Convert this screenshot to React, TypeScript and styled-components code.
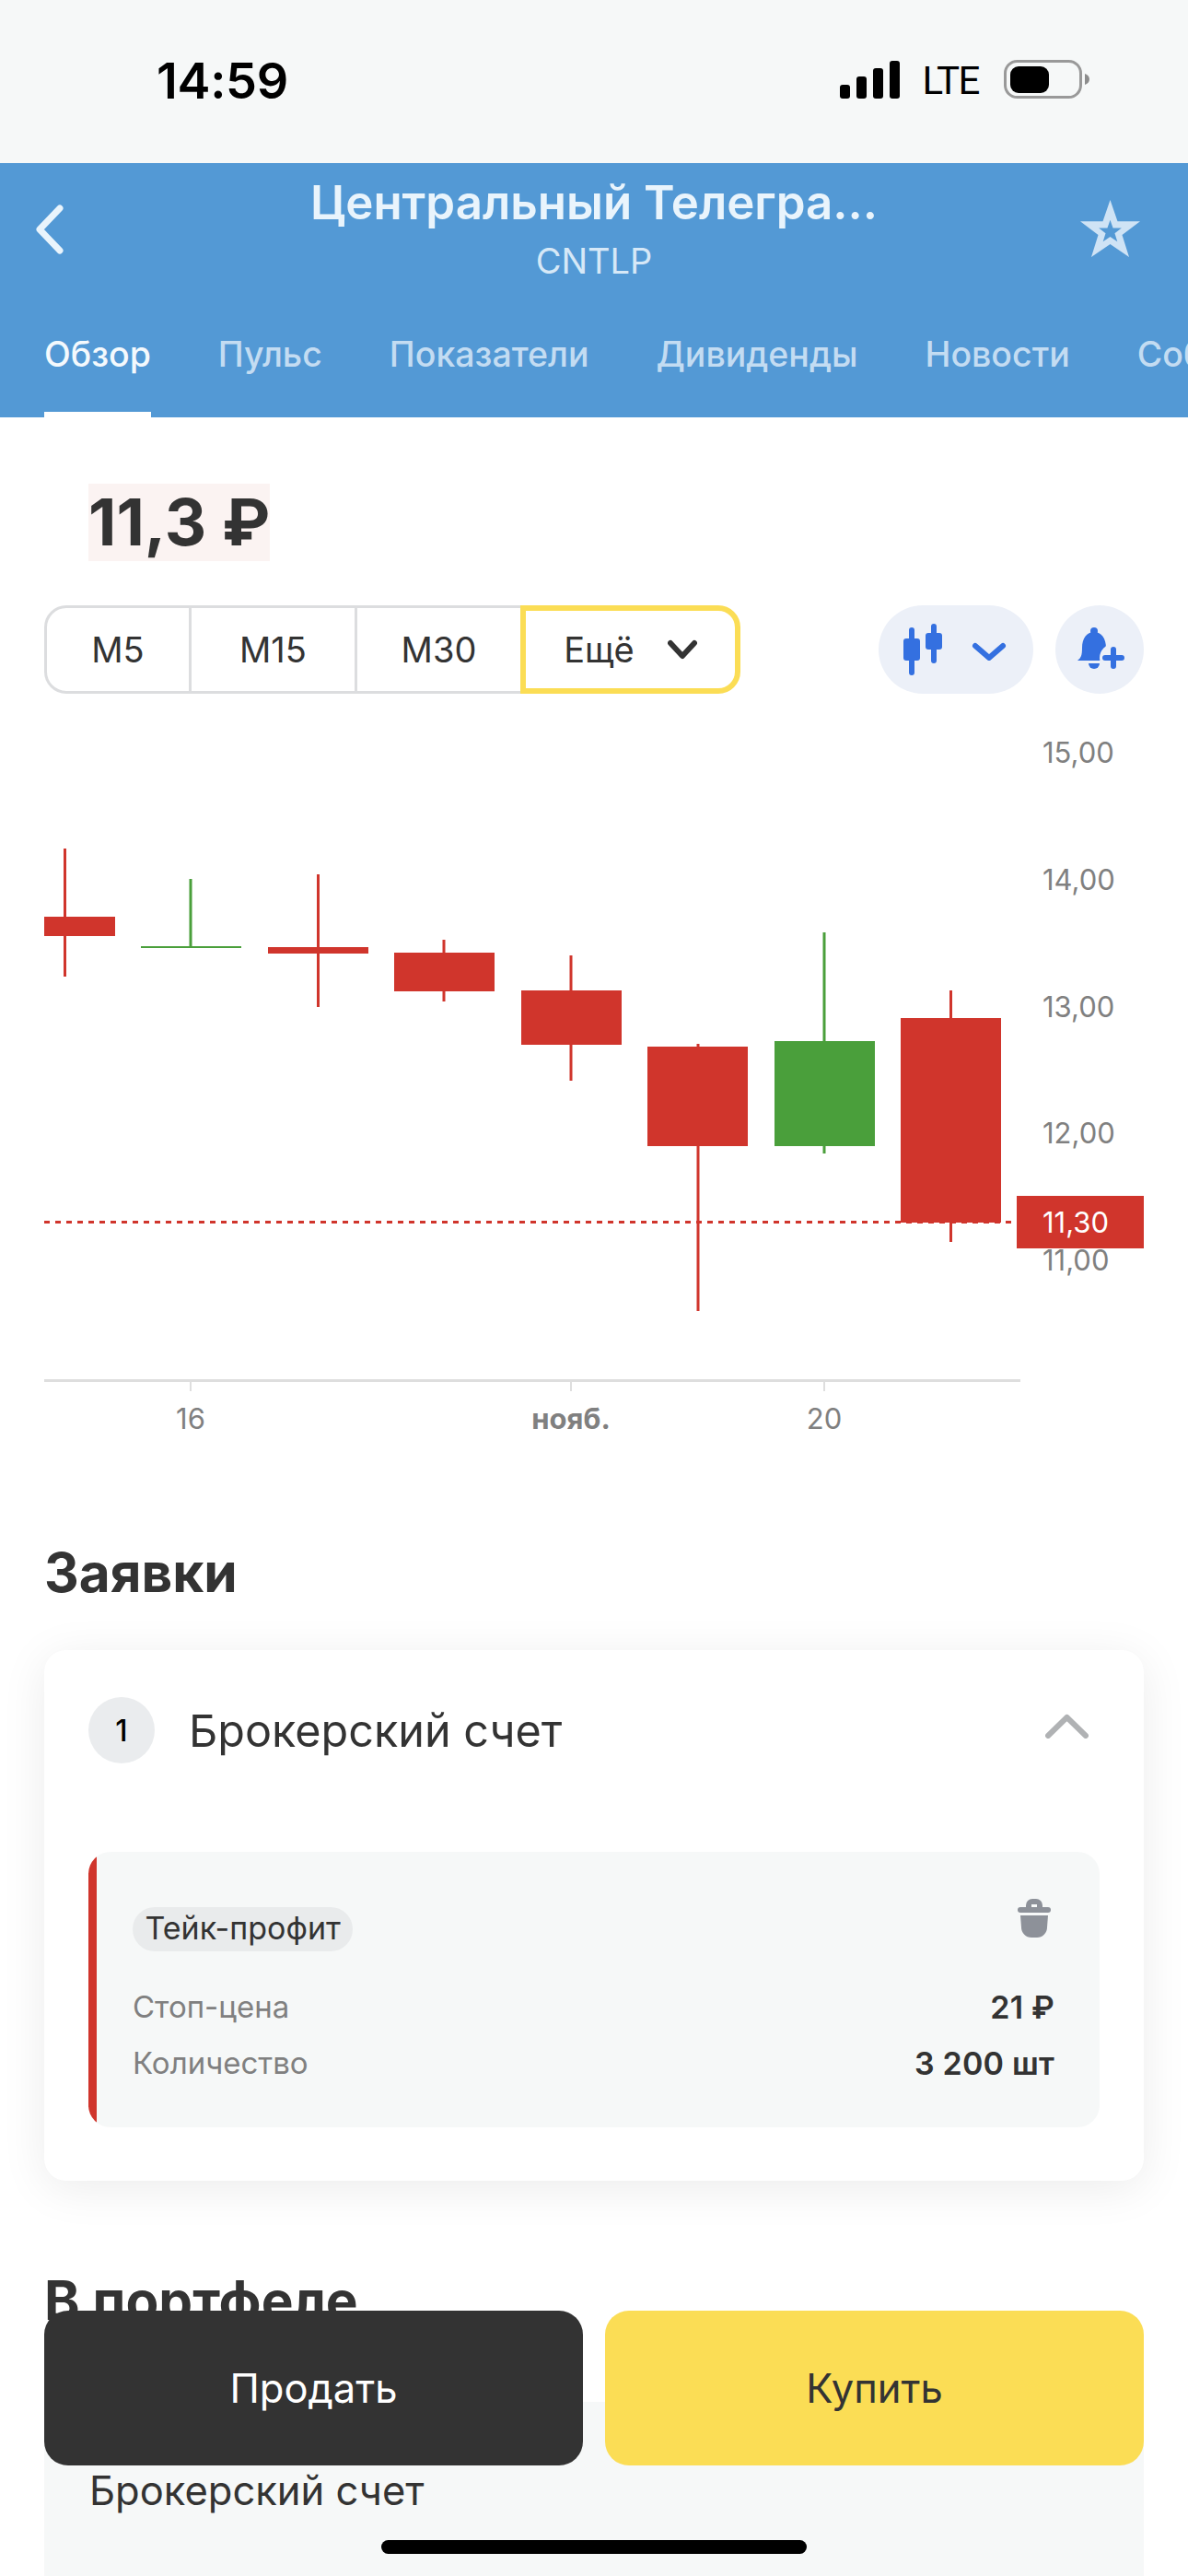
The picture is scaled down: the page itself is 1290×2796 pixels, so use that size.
import React from 'react';
import styled, { createGlobalStyle } from 'styled-components';

const GlobalStyle = createGlobalStyle`
    html, body {
        margin: 0;
        padding: 0;
        background: #fff;
    }
    body {
        font-family: Inter, "Noto Sans", sans-serif;
        color: #333;
    }
`;

const RED = '#d0352c';
const GREEN = '#4a9f3b';

const Page = styled.div`
    position: relative;
    width: 1290px;
    height: 2796px;
    overflow: hidden;
    background: #fff;
`;

const StatusBar = styled.div`
    height: 177px;
    box-sizing: border-box;
    padding: 60px 107px 0 170px;
    background: #f6f8f8;
    display: flex;
    justify-content: space-between;
    align-items: flex-start;
    color: #000;
`;

const Time = styled.div`
    font-size: 54px;
    line-height: 56px;
    font-weight: 600;
    letter-spacing: -0.3px;
`;

const StatusIcons = styled.div`
    display: flex;
    align-items: center;
    height: 42px;
    margin-top: 5px;
`;

const Lte = styled.span`
    font-family: Roboto, sans-serif;
    font-size: 42px;
    line-height: 42px;
    font-weight: 400;
    letter-spacing: -1.5px;
    margin: 4px 27px 0 25px;
`;

const Header = styled.div`
    height: 276px;
    background: #5399d5;
`;

const TopRow = styled.div`
    height: 150px;
    box-sizing: border-box;
    padding: 45px 52px 0 38px;
    display: flex;
    justify-content: space-between;
    align-items: flex-start;
`;

const BackIcon = styled.svg`
    margin-right: 47px;
`;

const StarIcon = styled.svg`
    margin-top: -5px;
`;

const TitleBlock = styled.div`
    flex: 1;
    margin-top: -27px;
    text-align: center;
`;

const Title = styled.div`
    font-size: 51px;
    line-height: 50px;
    font-weight: 600;
    color: #e9f4fc;
`;

const Ticker = styled.div`
    margin-top: 15px;
    font-size: 38px;
    line-height: 46px;
    color: #d6e8f7;
`;

const Tabs = styled.div`
    display: flex;
    gap: 73px;
    padding-left: 48px;
    white-space: nowrap;
    overflow: hidden;
`;

const Tab = styled.div<{ $active?: boolean }>`
    box-sizing: border-box;
    height: 126px;
    padding-top: 33px;
    font-size: 37.5px;
    line-height: 50px;
    font-weight: 500;
    color: ${props => (props.$active ? '#f4f9fd' : '#c3dcf2')};
    border-bottom: 6px solid ${props => (props.$active ? '#fff' : 'transparent')};
`;

const Price = styled.div`
    display: inline-block;
    margin: 72px 0 0 96px;
    background: #fbf3f2;
    font-size: 70.5px;
    line-height: 84px;
    font-weight: 700;
    color: #333;
    vertical-align: top;
`;

const Controls = styled.div`
    margin-top: 48px;
    padding: 0 48px;
    display: flex;
    justify-content: space-between;
`;

const Segments = styled.div`
    display: flex;
    height: 96px;
`;

const Segment = styled.div<{ $width: number; $first?: boolean }>`
    box-sizing: border-box;
    width: ${props => props.$width}px;
    display: flex;
    align-items: center;
    justify-content: center;
    font-size: 38px;
    color: #333;
    border: 3px solid #dcdddf;
    border-left-width: ${props => (props.$first ? 3 : 0)}px;
    border-right-width: 3px;
    border-radius: ${props => (props.$first ? '24px 0 0 24px' : '0')};
`;

const MoreSegment = styled(Segment)`
    gap: 36px;
    border: 6px solid #fbdd55;
    border-radius: 0 24px 24px 0;
    margin-left: -3px;
`;

const Actions = styled.div`
    display: flex;
    gap: 24px;
`;

const RoundButton = styled.div<{ $width: number }>`
    width: ${props => props.$width}px;
    height: 96px;
    border-radius: 48px;
    background: #ecf0f8;
`;

const ChartSvg = styled.svg`
    display: block;
    width: 1290px;
    height: 847px;
`;

const AxisText = styled.text<{ $bold?: boolean; $light?: boolean }>`
    font-family: Inter, sans-serif;
    font-size: 31px;
    font-weight: ${props => (props.$bold ? 700 : 400)};
    fill: ${props => (props.$light ? '#fff' : '#808080')};
`;

const SectionTitle = styled.h2<{ $top: number }>`
    margin: ${props => props.$top}px 0 0 48px;
    font-size: 58.5px;
    line-height: 68px;
    font-weight: 700;
    color: #333;
`;

const Card = styled.div`
    margin: 50px 48px 0;
    height: 576px;
    box-sizing: border-box;
    padding-top: 51px;
    background: #fff;
    border-radius: 24px;
    box-shadow: 0 8px 50px rgba(0, 0, 0, 0.08);
`;

const CardHead = styled.div`
    display: flex;
    align-items: center;
    padding: 0 60px 0 48px;
`;

const CollapseIcon = styled.svg`
    margin-bottom: 9px;
`;

const NumberBadge = styled.div`
    width: 72px;
    height: 72px;
    border-radius: 50%;
    background: #eaecee;
    display: flex;
    align-items: center;
    justify-content: center;
    font-size: 32px;
    font-weight: 500;
    color: #000;
`;

const AccountName = styled.div`
    flex: 1;
    margin: 2px 0 0 37px;
    font-size: 48.5px;
    line-height: 56px;
    color: #333;
`;

const Order = styled.div`
    margin: 96px 48px 0;
    height: 299px;
    box-sizing: border-box;
    padding: 51px 49px 0 48px;
    background: linear-gradient(to right, ${RED} 9px, #f6f8f8 9px);
    border-radius: 24px;
`;

const OrderTop = styled.div`
    display: flex;
    justify-content: space-between;
    align-items: flex-start;
    margin-bottom: 30px;
`;

const TrashIcon = styled.svg`
    margin-right: 4px;
`;

const Pill = styled.div`
    margin-top: 9px;
    height: 48px;
    box-sizing: border-box;
    padding: 0 13px 4px 13.5px;
    display: flex;
    align-items: center;
    border-radius: 24px;
    background: #e9ebec;
    font-size: 34px;
    color: #333;
`;

const OrderRow = styled.div`
    display: flex;
    justify-content: space-between;
    font-size: 33px;
    line-height: 61px;
`;

const RowLabel = styled.span`
    color: #808080;
`;

const RowValue = styled.span`
    font-size: 34px;
    font-weight: 600;
    letter-spacing: 0.2px;
    color: #333;
`;

const Portfolio = styled.div`
    margin: 76px 48px 0;
    height: 300px;
    box-sizing: border-box;
    padding: 68px 49px 0;
    background: #f6f8f8;
    font-size: 43.5px;
    line-height: 56px;
    color: #333;
`;

const TradeBar = styled.div`
    position: absolute;
    top: 2508px;
    left: 48px;
    right: 48px;
    display: grid;
    grid-template-columns: 1fr 1fr;
    gap: 24px;
`;

const TradeButton = styled.div<{ $buy?: boolean }>`
    height: 168px;
    border-radius: 26px;
    display: flex;
    align-items: center;
    justify-content: center;
    font-size: 43.5px;
    background: ${props => (props.$buy ? '#fbdd55' : '#333')};
    color: ${props => (props.$buy ? '#333' : '#fff')};
`;

const HomeBar = styled.div`
    position: absolute;
    left: 414px;
    bottom: 24px;
    width: 462px;
    height: 15px;
    border-radius: 8px;
    background: #000;
`;

type Candle = { x: number; w: number; top: number; bottom: number; wickX: number; high: number; low: number; color: string };

const candles: Candle[] = [
    { x: 48, w: 77, top: 995, bottom: 1016, wickX: 70.5, high: 921, low: 1060, color: RED },
    { x: 153, w: 109, top: 1027, bottom: 1029, wickX: 207, high: 954, low: 1028, color: GREEN },
    { x: 291, w: 109, top: 1028, bottom: 1035, wickX: 345.5, high: 949, low: 1093, color: RED },
    { x: 428, w: 109, top: 1034, bottom: 1076, wickX: 482, high: 1020, low: 1087, color: RED },
    { x: 566, w: 109, top: 1075, bottom: 1134, wickX: 620, high: 1037, low: 1173, color: RED },
    { x: 703, w: 109, top: 1136, bottom: 1244, wickX: 758, high: 1133, low: 1423, color: RED },
    { x: 841, w: 109, top: 1130, bottom: 1244, wickX: 895, high: 1012, low: 1252, color: GREEN },
    { x: 978, w: 109, top: 1105, bottom: 1327, wickX: 1032.5, high: 1075, low: 1348, color: RED },
];

const priceLabels = [
    { y: 817, text: '15,00' },
    { y: 955, text: '14,00' },
    { y: 1093, text: '13,00' },
    { y: 1230, text: '12,00' },
    { y: 1368, text: '11,00' },
];

const timeTicks = [
    { x: 207, text: '16' },
    { x: 620, text: 'нояб.', bold: true },
    { x: 895, text: '20' },
];

const tabs = ['Обзор', 'Пульс', 'Показатели', 'Дивиденды', 'Новости', 'События'];

const starPath = (() => {
    const outer = [[32.5, 0], [40.5, 23.3], [65, 23.3], [45.5, 38], [53, 62], [32.5, 48], [12, 62], [19.5, 38], [0, 23.3], [24.5, 23.3]];
    const cx = 32.5;
    const cy = 35;
    const inner = outer.map(([x, y]) => [cx + (x - cx) * 0.38, cy + (y - cy) * 0.38]);
    const toPath = (points: number[][]) => `M${points.map(p => p.join(' ')).join('L')}Z`;
    return toPath(outer) + toPath(inner);
})();

const Chart: React.FC = () => (
    <ChartSvg viewBox="0 753 1290 847">
        {candles.map(candle => (
            <g key={candle.x} fill={candle.color}>
                <rect x={candle.wickX - 1.5} y={candle.high} width={3} height={candle.low - candle.high} />
                <rect x={candle.x} y={candle.top} width={candle.w} height={candle.bottom - candle.top} />
            </g>
        ))}
        <line x1={48} x2={1100} y1={1326.5} y2={1326.5} stroke={RED} strokeWidth={3} strokeDasharray="6 6" />
        {priceLabels.map(label => (
            <AxisText key={label.text} x={1132} y={label.y + 11}>{label.text}</AxisText>
        ))}
        <rect x={1104} y={1298} width={138} height={57} fill={RED} />
        <AxisText x={1132} y={1338} $light>11,30</AxisText>
        <rect x={48} y={1497} width={1060} height={3} fill="#dedede" />
        {timeTicks.map(tick => (
            <g key={tick.x}>
                <rect x={tick.x - 1} y={1500} width={2} height={10} fill="#dedede" />
                <AxisText x={tick.x} y={1551} textAnchor="middle" $bold={tick.bold}>{tick.text}</AxisText>
            </g>
        ))}
    </ChartSvg>
);

const App: React.FC = () => (
    <Page>
        <GlobalStyle />
        <StatusBar>
            <Time>14:59</Time>
            <StatusIcons>
                <svg width="65" height="41" viewBox="0 0 65 41" fill="#000">
                    <rect x="0" y="26" width="11" height="15" rx="3" />
                    <rect x="18" y="17" width="11" height="24" rx="3" />
                    <rect x="36" y="8" width="11" height="33" rx="3" />
                    <rect x="54" y="0" width="11" height="41" rx="3" />
                </svg>
                <Lte>LTE</Lte>
                <svg width="93" height="42" viewBox="0 0 93 42">
                    <rect x="1.5" y="1.5" width="82" height="39" rx="13" fill="none" stroke="#999" strokeWidth="3" />
                    <rect x="7" y="7" width="42" height="29" rx="9" fill="#000" />
                    <path d="M88 15 c3 1 5 3 5 6 s-2 5-5 6 z" fill="#8c8c8c" />
                </svg>
            </StatusIcons>
        </StatusBar>

        <Header>
            <TopRow>
                <BackIcon width="32" height="54" viewBox="0 0 32 54" fill="none">
                    <path d="M27 4 L5 27 L27 50" stroke="#e9f4fc" strokeWidth="7" strokeLinecap="round" strokeLinejoin="round" />
                </BackIcon>
                <TitleBlock>
                    <Title>Центральный Телегра...</Title>
                    <Ticker>CNTLP</Ticker>
                </TitleBlock>
                <StarIcon width="65" height="62" viewBox="0 0 65 62">
                    <path d={starPath} fill="#cfe3f5" fillRule="evenodd" />
                </StarIcon>
            </TopRow>
            <Tabs>
                {tabs.map((tab, index) => (
                    <Tab key={tab} $active={index === 0}>{tab}</Tab>
                ))}
            </Tabs>
        </Header>

        <Price>11,3 ₽</Price>

        <Controls>
            <Segments>
                <Segment $width={160} $first>М5</Segment>
                <Segment $width={180}>М15</Segment>
                <Segment $width={180}>М30</Segment>
                <MoreSegment $width={239}>
                    Ещё
                    <svg width="32" height="22" viewBox="0 0 32 22" fill="none">
                        <path d="M3 4 L16 18 L29 4" stroke="#333" strokeWidth="6" strokeLinecap="round" strokeLinejoin="round" />
                    </svg>
                </MoreSegment>
            </Segments>
            <Actions>
                <RoundButton $width={168}>
                    <svg width="168" height="96" viewBox="0 0 168 96" fill="none" stroke="#3470e0" strokeLinecap="round">
                        <path d="M36 27 V73 M60 23 V60" strokeWidth="6" />
                        <rect x="27" y="36" width="18" height="24" rx="3" fill="#3470e0" stroke="none" />
                        <rect x="51" y="30" width="18" height="18" rx="3" fill="#3470e0" stroke="none" />
                        <path d="M105 44 L120 57 L135 44" strokeWidth="6" strokeLinejoin="round" />
                    </svg>
                </RoundButton>
                <RoundButton $width={96}>
                    <svg width="96" height="96" viewBox="0 0 96 96" fill="#3470e0">
                        <circle cx="42" cy="28" r="4" />
                        <path d="M24 60 c4-3 5-6 5-14 c0-10 5-17 13-17 s13 7 13 17 c0 8 1 11 5 14 Z" />
                        <path d="M36 63 h12 a6 6 0 0 1 -12 0 Z" />
                        <circle cx="63" cy="57" r="15" fill="#ecf0f8" />
                        <path d="M63 48 V66 M54 57 H72" stroke="#3470e0" strokeWidth="6" strokeLinecap="round" />
                    </svg>
                </RoundButton>
            </Actions>
        </Controls>

        <Chart />

        <SectionTitle $top={73}>Заявки</SectionTitle>
        <Card>
            <CardHead>
                <NumberBadge>1</NumberBadge>
                <AccountName>Брокерский счет</AccountName>
                <CollapseIcon width="47" height="27" viewBox="0 0 47 27" fill="none">
                    <path d="M3 24 L23.5 4 L44 24" stroke="#b0b2b4" strokeWidth="6" strokeLinecap="round" strokeLinejoin="round" />
                </CollapseIcon>
            </CardHead>
            <Order>
                <OrderTop>
                    <Pill>Тейк-профит</Pill>
                    <TrashIcon width="36" height="42" viewBox="0 0 36 42" fill="#8d9199">
                        <path fillRule="evenodd" d="M9 9 V7 A7 7 0 0 1 16 0 H20 A7 7 0 0 1 27 7 V9 Z M15 6 V9 H21 V6 Z" />
                        <rect x="0" y="9" width="36" height="6" rx="3" />
                        <path d="M3 18 H33 L32 31 A11 11 0 0 1 21 42 H15 A11 11 0 0 1 4 31 Z" />
                    </TrashIcon>
                </OrderTop>
                <OrderRow>
                    <RowLabel>Стоп-цена</RowLabel>
                    <RowValue>21 ₽</RowValue>
                </OrderRow>
                <OrderRow>
                    <RowLabel>Количество</RowLabel>
                    <RowValue>3 200 шт</RowValue>
                </OrderRow>
            </Order>
        </Card>

        <SectionTitle $top={96}>В портфеле</SectionTitle>
        <Portfolio>Брокерский счет</Portfolio>

        <TradeBar>
            <TradeButton>Продать</TradeButton>
            <TradeButton $buy>Купить</TradeButton>
        </TradeBar>
        <HomeBar />
    </Page>
);

export default App;
